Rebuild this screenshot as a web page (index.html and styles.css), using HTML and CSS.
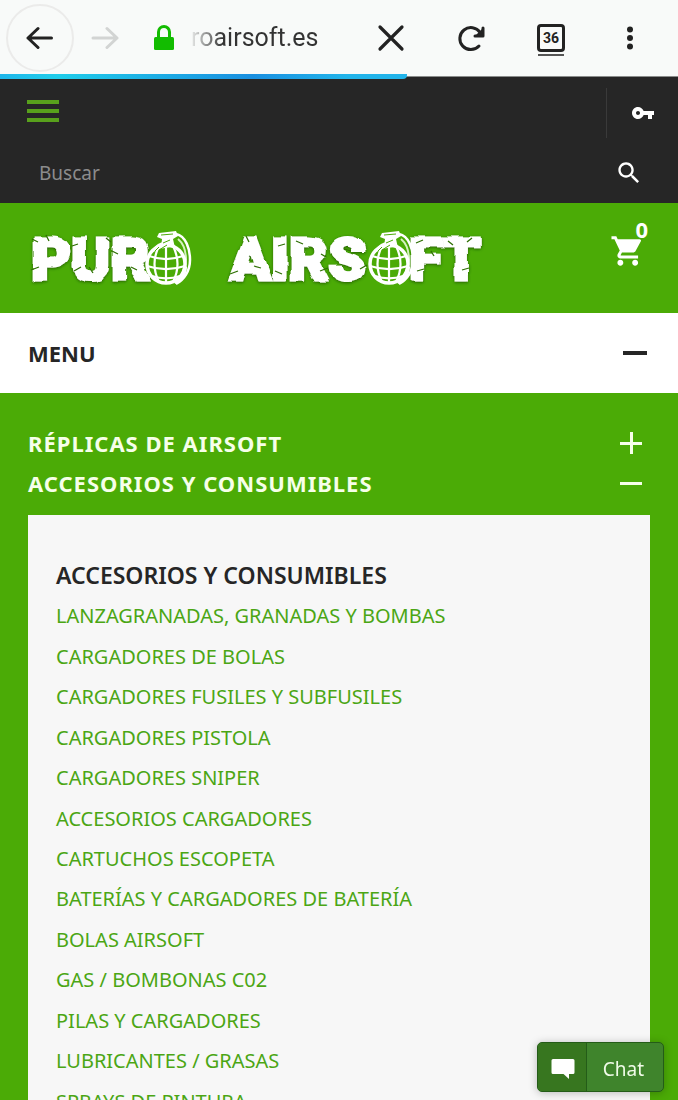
FILE: index.html
```html
<!DOCTYPE html>
<html lang="es">
<head>
  <meta charset="UTF-8" />
  <meta name="viewport" content="width=device-width, initial-scale=1.0"/>
  <title>Puro Airsoft</title>
  <link rel="stylesheet" href="styles.css">
</head>
<body>
  <!-- browser bar -->
  <div class="browser">
    <button class="nav-btn back" aria-label="Back">
      <svg width="28" height="24" viewBox="0 0 28 24"><path d="M25.500 12H2M12 2.500 2 12l10 9.500"/></svg>
    </button>
    <button class="nav-btn forward" aria-label="Forward">
      <svg width="28" height="24" viewBox="0 0 28 24"><path d="M2 12h24M16 2.500 26 12l-10 9.500"/></svg>
    </button>
    <svg class="lock" width="20" height="26" viewBox="0 0 20 26"><path d="M4.500 13V7a5.500 5.500 0 0 1 11 0v6" fill="none" stroke="#12bc00" stroke-width="3"/><rect y="12" width="20" height="13" rx="1.500" fill="#12bc00"/></svg>
    <span class="url">roairsoft.es</span>
    <div class="tools">
      <button aria-label="Stop"><svg width="28" height="28" viewBox="0 0 28 28"><path d="M3 3l22 22M25 3 3 25" stroke-width="3.200"/></svg></button>
      <button aria-label="Reload"><svg width="28" height="28" viewBox="0 0 28 28"><path d="M22 22A11 11 0 1 1 23 8.500M26 4v8h-8"/><path d="M26 4v8h-8z" fill="#222" stroke="none"/></svg></button>
      <button class="tabs" aria-label="Tabs"><span>36</span></button>
      <button aria-label="More"><svg width="28" height="28" viewBox="0 0 28 28"><g fill="#222" stroke="none"><circle cx="13" cy="5.500" r="3"/><circle cx="13" cy="14" r="3"/><circle cx="13" cy="22.500" r="3"/></g></svg></button>
    </div>
    <div class="progress"></div>
  </div>

  <header class="topbar">
    <div class="topbar-row">
      <button class="burger" aria-label="Abrir"><i></i><i></i><i></i></button>
      <a class="account" href="#" aria-label="Iniciar sesión">
        <svg width="24" height="24" viewBox="0 0 24 24"><path fill="#fff" d="M12.650 10C11.830 7.670 9.610 6 7 6c-3.310 0-6 2.690-6 6s2.690 6 6 6c2.610 0 4.830-1.670 5.650-4H17v4h4v-4h2v-4H12.650zM7 14c-1.100 0-2-.9-2-2s.9-2 2-2 2 .9 2 2-.9 2-2 2z"/></svg>
      </a>
    </div>
    <form class="search">
      <input type="text" placeholder="Buscar" aria-label="Buscar">
      <button type="button" aria-label="Buscar">
        <svg width="26" height="26" viewBox="1 1 22 22"><path fill="#fff" d="M15.500 14h-.79l-.28-.27C15.410 12.590 16 11.110 16 9.500 16 5.910 13.090 3 9.500 3S3 5.910 3 9.500 5.910 16 9.500 16c1.610 0 3.090-.59 4.230-1.570l.27.28v.79l5 4.990L20.490 19l-4.990-5zm-6 0C7.010 14 5 11.990 5 9.500S7.010 5 9.500 5 14 7.010 14 9.500 11.990 14 9.500 14z"/></svg>
      </button>
    </form>
  </header>

  <div class="brand">
    <a href="#" aria-label="Puro Airsoft">
      <svg class="logo" width="464" height="88" viewBox="0 -12 464 88">
        <defs>
          <filter id="rough" x="-5%" y="-10%" width="110%" height="125%">
            <feTurbulence type="fractalNoise" baseFrequency="0.09" numOctaves="1" seed="7"/>
            <feDisplacementMap in="SourceGraphic" scale="5" xChannelSelector="R" yChannelSelector="G"/>
            <feDropShadow dx="0" dy="1" stdDeviation="1.500" flood-color="#1c4a00" flood-opacity="0.8"/>
          </filter>
          <g id="grenade">
            <path d="M14 2l17-2 2 5-5 3 2 9H16l1-9-5-2z" fill="#fff"/>
            <path d="M31 3c10 2 14 15 14 26 0 11-6 20-14 24" fill="none" stroke="#fff" stroke-width="2.500"/>
            <path d="M33 8c6 5 8 13 8 21 0 8-3 14-7 18" fill="none" stroke="#d6f2c0" stroke-width="2"/>
            <circle cx="21" cy="33" r="19" fill="#4bab06" stroke="#fff" stroke-width="3.500"/>
            <g fill="none" stroke="#fff" stroke-width="2.200">
              <path d="M21 14v38M14 15c-6 12-6 24 0 36M28 15c6 12 6 24 0 36"/>
              <path d="M4 25c11 4 23 4 34 0M2 35c12 4 26 4 38 0M7 45c9 3 19 3 28 0"/>
            </g>
            <path d="M6 22c3-8 9-12 20-12l6 7c-8-2-17 0-26 5zM29 50c6-4 9-10 10-17l3 3c0 8-5 15-12 17z" fill="#fff"/>
            <path d="M16 4l12-1M18 12l7-3M14 19l8-5M10 20l4-4" stroke="#4bab06" fill="none"/>
          </g>
        </defs>
        <g class="logo-text" filter="url(#rough)">
          <text x="4" y="54">PUR</text>
          <text x="202" y="54">AIRS</text>
          <text x="381" y="54">FT</text>
        </g>
        <g fill="none" stroke="#2f7004" stroke-width="1.300">
          <path d="M4 13l6 3M3 44l8-3M18 9l3 6M44 20l6-2M46 45l7-4M61 41l4 6M78 12l5 4M84 25l6 3M103 41l6 3M202 48l8-3M218 10l3 6M226 40l7 2M250 20l7-2M247 45l7 3M268 15l7 3M292 45l8-3M293 28l5 3M316 23l7 2M332 43l7-4M388 17l7-3M389 45l7-2M403 25l3 5M420 15l5 4M434 44l7-2M444 12l-5 4"/>
        </g>
        <use href="#grenade" x="117" y="5"/>
        <use href="#grenade" x="340" y="5"/>
      </svg>
    </a>
    <a class="cart" href="#" aria-label="Carrito">
      <svg width="34" height="34" viewBox="0 1 23 22"><path fill="#fff" d="M7 18c-1.100 0-1.990.9-1.990 2S5.900 22 7 22s2-.9 2-2-.9-2-2-2zM1 2v2h2l3.600 7.590-1.350 2.450c-.16.28-.25.610-.25.960 0 1.100.9 2 2 2h12v-2H7.420c-.14 0-.25-.11-.25-.25l.03-.12.9-1.630h7.450c.75 0 1.410-.41 1.750-1.030l3.580-6.490A1.003 1.003 0 0 0 20 4H5.210l-.94-2H1zm16 16c-1.100 0-1.990.9-1.990 2s.89 2 1.990 2 2-.9 2-2-.9-2-2-2z"/></svg>
      <span class="count">0</span>
    </a>
  </div>

  <button class="menu-toggle">MENU <i class="minus"></i></button>

  <nav class="nav">
    <button class="cat">RÉPLICAS DE AIRSOFT <i class="plus"></i></button>
    <button class="cat">ACCESORIOS Y CONSUMIBLES <i class="minus"></i></button>
    <div class="panel">
      <h2>ACCESORIOS Y CONSUMIBLES</h2>
      <ul>
        <li><a href="#">LANZAGRANADAS, GRANADAS Y BOMBAS</a></li>
        <li><a href="#">CARGADORES DE BOLAS</a></li>
        <li><a href="#">CARGADORES FUSILES Y SUBFUSILES</a></li>
        <li><a href="#">CARGADORES PISTOLA</a></li>
        <li><a href="#">CARGADORES SNIPER</a></li>
        <li><a href="#">ACCESORIOS CARGADORES</a></li>
        <li><a href="#">CARTUCHOS ESCOPETA</a></li>
        <li><a href="#">BATERÍAS Y CARGADORES DE BATERÍA</a></li>
        <li><a href="#">BOLAS AIRSOFT</a></li>
        <li><a href="#">GAS / BOMBONAS C02</a></li>
        <li><a href="#">PILAS Y CARGADORES</a></li>
        <li><a href="#">LUBRICANTES / GRASAS</a></li>
        <li><a href="#">SPRAYS DE PINTURA</a></li>
      </ul>
    </div>
  </nav>

  <button class="chat">
    <span class="chat-icon"><svg width="24" height="22" viewBox="0 0 24 22"><path fill="#fff" d="M2 1h20a1.500 1.500 0 0 1 1.500 1.500v12A1.500 1.500 0 0 1 22 16h-4v5l-5.500-5H2A1.500 1.500 0 0 1 .5 14.500v-12A1.500 1.500 0 0 1 2 1z"/></svg></span>
    <span class="chat-label">Chat</span>
  </button>
</body>
</html>
```

FILE: styles.css
```css
:root {
  --green: #4bab06;
  --link: #4ba614;
  --dark: #262626;
  --panel: #f7f7f7;
}
* { box-sizing: border-box; }
body {
  margin: 0; height: 100vh; overflow: hidden;
  display: flex; flex-direction: column;
  background-color: var(--green);
  font-family: 'Noto Sans', 'Open Sans', sans-serif; font-size: 20px;
}
button {
  border: 0; padding: 0; background: none;
  font: inherit; color: inherit; text-align: left; cursor: pointer;
}
a { color: inherit; text-decoration: none; }
svg { display: block; }

/* browser bar */
.browser {
  position: relative; flex: none; height: 77px; padding: 0 11px 0 6px;
  display: flex; align-items: center;
  background-color: #f8faf9; border-bottom: 1px solid #8a8c8b;
}
.browser button { display: flex; align-items: center; justify-content: center; }
.browser svg { fill: none; stroke: #222; stroke-width: 3; stroke-linecap: round; stroke-linejoin: round; }
.browser .lock { stroke: none; margin-left: 35px; }
.browser .back { width: 68px; height: 68px; border: 2px solid #ebebea; border-radius: 50%; }
.forward { margin-left: 17px; }
.browser .forward svg { stroke: #d2d4d3; }
.url {
  margin-left: 17px;
  font-family: Roboto, sans-serif; font-size: 25px; line-height: 32px;
  background: linear-gradient(90deg, #e8eae9, #333 32px);
  -webkit-background-clip: text; background-clip: text; color: transparent;
}
.tools { display: flex; gap: 8px; margin-left: auto; }
.tools button { width: 72px; height: 40px; }
.tabs span {
  position: relative; width: 28px; height: 28px;
  border: 3px solid #222; border-radius: 4px;
  font: 700 14px/22px Roboto, sans-serif; color: #222; text-align: center;
}
.tabs span::after {
  content: ""; position: absolute; left: -2px; right: -2px; bottom: -7px;
  height: 2px; background-color: #555;
}
.progress {
  position: absolute; left: 0; bottom: -3px; width: 60%; height: 5px;
  border-radius: 0 0 4px 0;
  background: linear-gradient(90deg, #1fb6ea, #20cdea 14%, #1a8fe0 62%, #22b4ea 85%);
}

/* dark top bar */
.topbar { flex: none; background-color: var(--dark); padding: 11px 23px 6px 27px; }
.topbar-row { display: flex; align-items: center; justify-content: space-between; height: 50px; }
.burger { display: flex; flex-direction: column; gap: 5px; width: 32px; padding-bottom: 4px; }
.burger i { height: 4px; background-color: #58a01c; }
.account {
  display: flex; align-items: center; height: 50px; padding-left: 24px;
  border-left: 1px solid #3a3a3a;
}
.search { display: flex; align-items: center; height: 59px; padding: 10px 13px 0 12px; }
.search input {
  flex: 1; min-width: 0; border: 0; padding: 0; outline: 0;
  background: none; color: #fff; font: inherit; font-size: 19px; line-height: 30px;
}
.search input::placeholder { color: #8c8c8c; opacity: 1; }

/* logo + cart */
.brand {
  flex: none; height: 110px; padding: 0 34px 0 28px;
  display: flex; align-items: center; justify-content: space-between;
}
.logo-text { font-family: Roboto, sans-serif; font-size: 60px; font-weight: 900; fill: #fff; stroke: #fff; stroke-width: 3; }
.cart { position: relative; color: #fff; margin-bottom: 14px; }
.count {
  position: absolute; right: -4px; top: -17px;
  font-size: 22px; font-weight: 700; line-height: 24px;
}

/* accordion */
.menu-toggle, .cat { display: flex; align-items: center; justify-content: space-between; width: 100%; }
.menu-toggle {
  flex: none; height: 80px; padding: 0 31px 0 28px;
  background-color: #fff; color: var(--dark);
  font-size: 22px; font-weight: 700;
}
.minus, .plus { width: 22px; height: 3px; background-color: currentColor; }
.menu-toggle .minus { width: 24px; height: 4px; }
.plus { position: relative; }
.plus::after {
  content: ""; position: absolute; left: 10px; top: -10px;
  width: 3px; height: 22px; background-color: currentColor;
}
.nav { flex: 1; min-height: 0; display: flex; flex-direction: column; padding: 30px 28px 0; }
.cat {
  flex: none; height: 40px; padding-right: 8px;
  color: #f6ffe9; font-size: 22px; font-weight: 700; letter-spacing: 1px;
}
.panel {
  flex: 1; min-height: 0; margin-top: 12px; padding: 45px 28px 0;
  display: flex; flex-direction: column;
  background-color: var(--panel);
}
.panel h2 { margin: 0 0 6px; font-size: 23px; font-weight: 600; line-height: 30px; color: var(--dark); }
/* the last row runs off the bottom of the screen */
.panel ul {
  flex: 1; margin: 0 0 -22px; padding: 0; list-style: none;
  display: grid; grid-auto-rows: 1fr; align-items: center;
}
.panel li { color: var(--link); line-height: 28px; }

/* chat */
.chat {
  position: fixed; right: 14px; bottom: 8px; height: 50px;
  display: flex; align-items: stretch;
  border: 1px solid #245c18; border-radius: 5px;
  background-color: #3f842c; color: #f0fbe8;
  box-shadow: 0 1px 8px rgba(0,0,0,0.25);
}
.chat-icon {
  display: flex; align-items: center; padding: 3px 11px 0 13px;
  background-color: #37761f; border-right: 1px solid #245c18; border-radius: 4px 0 0 4px;
}
.chat-label { padding: 0 19px 0 16px; font-size: 19px; line-height: 52px; }
```
